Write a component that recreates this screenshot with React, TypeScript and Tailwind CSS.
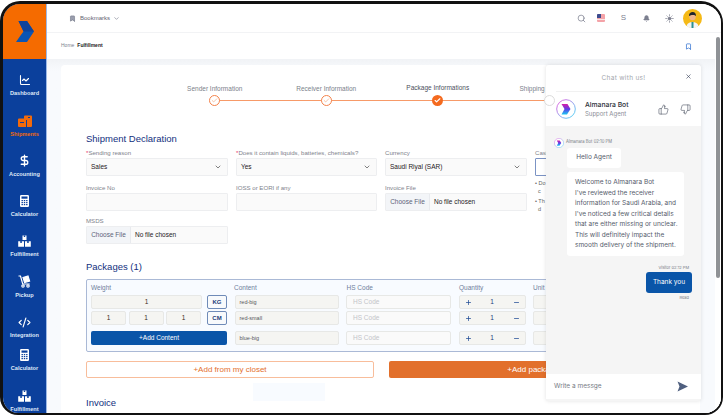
import React from "react";
import { ChartLine, DollarSign, CodeXml, ChevronDown, Bookmark, Search, Sun, Bell, X, ThumbsUp, ThumbsDown, Check, Plus, Minus } from "lucide-react";

const ShipIcon = () => (
  <svg width="14" height="12" viewBox="0 0 14 12" fill="#f26a0b">
    <path d="M6 1.5a1 1 0 0 1 1-1h6a1 1 0 0 1 1 1V11a1 1 0 0 1-1 1H9V5H6z" />
    <path d="M0 4.5a1 1 0 0 1 1-1h6.5a.5.5 0 0 1 .5.5v8H1a1 1 0 0 1-1-1zM2 7v1h4V7z" fillRule="evenodd" />
    <rect x="10" y="2" width="2" height="1" fill="#0b409c" />
  </svg>
);
const BoxesIcon = () => (
  <svg width="13" height="12" viewBox="0 0 13 12" fill="#fff">
    <path d="M4.5 0.5h4v4.5h-4z" />
    <path d="M0.2 6.2h5.8v5.6h-5.8zM7 6.2h5.8v5.6H7z" />
    <path d="M2.3 6h1.5v2h-1.5zM9.2 6h1.5v2H9.2zM5.8 .5h1.4v1.6H5.8z" fill="#0b409c" />
  </svg>
);
const PickupIcon = () => (
  <svg width="13" height="13" viewBox="0 0 13 13" fill="none" stroke="#fff" strokeWidth="1.2">
    <path d="M0.5 1h2l2.2 8h7" />
    <circle cx="5" cy="11" r="1.2" />
    <circle cx="10" cy="11" r="1.2" />
    <path d="M5 2.5l5-1.5 1.6 5-5 1.6z" fill="#fff" />
  </svg>
);
const CalcSolid = () => (
  <svg width="9" height="12" viewBox="0 0 9 12">
    <rect width="9" height="12" rx="1.2" fill="#fff" />
    <rect x="1.5" y="1.5" width="6" height="2.2" fill="#0b409c" />
    {[5, 7, 9].map((y) => [1.5, 3.8, 6.1].map((x) => <rect key={`${x}${y}`} x={x} y={y} width="1.4" height="1.2" fill="#0b409c" />))}
  </svg>
);
const BotLogo = ({ size }: { size: number }) => (
  <svg width={size} height={size} viewBox="0 0 20 20" fill="none">
    <defs>
      <linearGradient id={`r${size}`} x1="0" y1="0" x2="1" y2="1">
        <stop offset="0" stopColor="#e935d8" />
        <stop offset="1" stopColor="#1ad5f5" />
      </linearGradient>
      <linearGradient id={`a${size}`} x1="0" y1="0" x2="0" y2="1">
        <stop offset="0" stopColor="#d81ba8" />
        <stop offset=".5" stopColor="#5b3fe8" />
        <stop offset="1" stopColor="#18c8f2" />
      </linearGradient>
    </defs>
    <circle cx="10" cy="10" r="9.3" stroke={`url(#r${size})`} strokeWidth=".8" fill="#fff" />
    <path d="M5.5 5h6l3 5-3.5 5.5H5.5L8.5 10z" fill={`url(#a${size})`} />
  </svg>
);

const Nav = ({ icon, label, active, cls }: { icon: React.ReactNode; label: string; active?: boolean; cls: string }) => (
  <div className={`flex flex-col items-center justify-end ${cls}`}>
    <div className="h-[14px] flex items-center justify-center">{icon}</div>
    <div className={`text-[5.6px] leading-[8px] mt-[2px] font-bold ${active ? "text-[#f26a0b]" : "text-[#dfe8f7]"}`}>{label}</div>
  </div>
);

const Step = ({ label, state, up, last }: { label: string; state: "done" | "cur" | "todo"; up?: boolean; last?: boolean }) => (
  <div className="w-[111.5px] shrink-0 flex flex-col items-center relative">
    <div className={`text-[6.5px] leading-[8px] whitespace-nowrap ${up ? "text-[#4b4f5c] mb-[3px]" : "text-[#7b7f8a] mt-[1px] mb-[2px]"}`}>{label}</div>
    <div className={`relative z-10 w-[11px] h-[11px] rounded-full flex items-center justify-center ${state === "cur" ? "bg-[#f46a1f]" : state === "todo" ? "bg-white border border-[#dcdcdc]" : "bg-white border border-[#f4824a]"}`}>
      {state !== "todo" && <Check size={7} strokeWidth={state === "cur" ? 4 : 2} color={state === "cur" ? "#fff" : "#f19a68"} />}
    </div>
    {!last && <div className="absolute left-1/2 bottom-[5px] w-full h-px bg-[#f79a68]" />}
  </div>
);

const Label = ({ children, req }: { children: React.ReactNode; req?: boolean }) => (
  <div className="text-[6.1px] leading-[8px] text-[#80838c] whitespace-nowrap">
    {req && <span className="text-[#e8356d]">*</span>}
    {children}
  </div>
);
const SelectBox = ({ v }: { v: string }) => (
  <div className="h-[18px] mt-[1px] bg-[#fafafa] border border-[#edeef0] rounded-[1px] flex items-center justify-between pl-[4px] pr-[5px] text-[6.5px] text-[#1f2024]">
    <span>{v}</span>
    <ChevronDown size={8} color="#444" />
  </div>
);
const InputBox = () => <div className="h-[18px] mt-[1px] bg-[#fafafa] border border-[#edeef0] rounded-[1px]" />;
const FileBox = () => (
  <div className="h-[18px] mt-[1px] bg-[#fafafa] border border-[#edeef0] rounded-[1px] flex items-center text-[6.5px]">
    <div className="h-full w-[44px] bg-[#f3f5f8] border-r border-[#e8eaee] flex items-center justify-center text-[#5d6478]">Choose File</div>
    <div className="pl-[4px] text-[#1f2024]">No file chosen</div>
  </div>
);

const Cell = ({ w, children, ph }: { w: string; children?: React.ReactNode; ph?: boolean }) => (
  <div className={`${w} h-[14px] shrink-0 rounded-[2px] border border-[#e7e8e6] flex items-center text-[5.5px] ${ph ? "bg-[#fafafa] text-[#c2c4c8] text-[6.5px] pl-[6px]" : "bg-[#f5f5f2] text-[#55575c] pl-[4px]"}`}>
    {children}
  </div>
);
const Center = ({ w, v = "1" }: { w: string; v?: string }) => (
  <div className={`${w} h-[14px] shrink-0 rounded-[2px] border border-[#e7e8e6] bg-[#f5f5f2] flex items-center justify-center text-[6.5px] text-[#3a2a20] font-medium`}>{v}</div>
);
const Unit = ({ v }: { v: string }) => (
  <div className="w-[20px] h-[14px] shrink-0 ml-auto rounded-[2px] border border-[#6f8bb8] bg-[#f8fafc] flex items-center justify-center text-[6px] font-bold text-[#1b3a78]">{v}</div>
);
const Qty = () => (
  <div className="w-[67px] h-[14px] shrink-0 rounded-[2px] border border-[#e7e8e6] bg-[#f5f5f2] flex items-center justify-between px-[5px] text-[6.5px] font-medium text-[#1b3a78]">
    <Plus size={7} strokeWidth={2.5} color="#1f4a94" />
    <span>1</span>
    <Minus size={7} strokeWidth={2.5} color="#1f4a94" />
  </div>
);
const Rest = ({ name }: { name: string }) => (
  <>
    <Cell w="w-[104px]"><span>{name}</span></Cell>
    <Cell w="w-[105px]" ph><span>HS Code</span></Cell>
    <Qty />
    <Cell w="w-[40px]" />
  </>
);

export default function App() {
  return (
    <div className="w-[725px] h-[416px] bg-white overflow-hidden pr-[2px] pt-px pb-[1px]" style={{ fontFamily: '"Liberation Sans", Arial, sans-serif' }}>
      <div className="w-full h-[414px] rounded-tl-[20px] rounded-tr-[22px] rounded-bl-[18px] rounded-br-[18px] border-t-[3px] border-l-[3px] border-r-[2px] border-b-[2px] border-[#111] overflow-hidden flex relative bg-white">
        {/* sidebar */}
        <div className="w-[44px] shrink-0 flex flex-col bg-[#0b409c] border-r border-[#9db9e6] relative">
          <div className="h-[55px] shrink-0 bg-[#f56b00] flex items-center justify-center">
            <svg width="18" height="22" viewBox="0 0 18 22">
              <path d="M2.5 0h8.5l7 10.5-7 10.5H0l4.5-6.5 3-4z" fill="#0b55b4" />
              <path d="M2.5 0h8.5l7 10.5H7.5z" fill="#10439a" />
            </svg>
          </div>
          <Nav cls="h-[38px]" icon={<ChartLine size={12} color="#fff" strokeWidth={2.2} />} label="Dashboard" />
          <Nav cls="h-[40.5px]" active icon={<ShipIcon />} label="Shipments" />
          <Nav cls="h-[40px]" icon={<DollarSign size={13} color="#fff" strokeWidth={2.5} />} label="Accounting" />
          <Nav cls="h-[40px]" icon={<CalcSolid />} label="Calculator" />
          <Nav cls="h-[40.5px]" icon={<BoxesIcon />} label="Fulfillment" />
          <Nav cls="h-[40.5px]" icon={<PickupIcon />} label="Pickup" />
          <Nav cls="h-[40.5px]" icon={<CodeXml size={13} color="#fff" strokeWidth={2.2} />} label="Integration" />
          <Nav cls="h-[33px]" icon={<CalcSolid />} label="Calculator" />
          <Nav cls="h-[41px]" icon={<BoxesIcon />} label="Fulfillment" />
        </div>
        {/* main */}
        <div className="flex-1 min-w-0 flex flex-col relative">
          <div className="h-[29px] shrink-0 bg-white border-b border-[#f2f3f5] flex items-center pl-[22px] pr-[19px]">
            <Bookmark size={7} color="#6f7484" fill="#9a9eae" />
            <span className="ml-[4px] text-[6px] text-[#5f6370]">Bookmarks</span>
            <ChevronDown size={7} color="#6f7484" className="ml-[3px]" />
            <div className="ml-auto flex items-center">
              <Search size={9} color="#7d8090" />
              <svg width="8" height="8" viewBox="0 0 8 8" className="ml-[10.5px] rounded-[1px]">
                <rect width="8" height="8" fill="#f4a3a8" />
                <rect width="4" height="4" fill="#3d4d8f" />
                <rect y="5" width="8" height="1" fill="#fbe3e4" />
              </svg>
              <span className="ml-[16px] text-[8px] text-[#7d8090]">S</span>
              <Bell size={7} color="#7d8090" fill="#7d8090" className="ml-[17px]" />
              <Sun size={9} color="#7d8090" fill="#7d8090" className="ml-[15px]" />
              <svg width="19" height="19" viewBox="0 0 19 19" className="ml-[9px]">
                <circle cx="9.5" cy="9.5" r="9.5" fill="#f5b916" />
                <path d="M3.5 17c1-3 3-4 6-4s5 1 6 4a9.5 9.5 0 0 1-12 0z" fill="#f4f4f4" />
                <circle cx="9.5" cy="8" r="3.2" fill="#eeb58c" />
                <path d="M6 7c0-3 1.6-4 3.7-4S13 4.500 13 7c-1-1.500-5-1.500-7 0z" fill="#20242c" />
                <path d="M8.500 13h2v6h-2z" fill="#2d8f8f" />
              </svg>
            </div>
          </div>
          <div className="h-[26px] shrink-0 bg-white flex items-center pl-[14px] pr-[29px] text-[5px]">
            <span className="text-[#7d8090]">Home</span>
            <span className="ml-[3px] text-[#222] font-bold">Fulfillment</span>
            <Bookmark size={7} color="#2f6fd0" strokeWidth={2.5} className="ml-auto" />
          </div>
          <div className="flex-1 min-h-0 bg-[#f1f3f6] flex">
            <div className="flex-1 min-w-0 pl-[14px] pt-[6px] pr-[15px] bg-gradient-to-b from-[#f1f3f6] to-[#f8fafd] to-[12px]">
              <div className="h-[360px] bg-white rounded-t-[4px] pl-[25px] overflow-hidden">
                {/* stepper */}
                <div className="flex h-[41px] items-end ml-[73px] w-[600px]">
                  <Step label="Sender Information" state="done" />
                  <Step label="Receiver Information" state="done" />
                  <Step label="Package Informations" state="cur" up />
                  <Step label="Shipping Information" state="todo" last />
                </div>
                <div className="mt-[27.3px] text-[9.5px] leading-[12px] text-[#12307e]">Shipment Declaration</div>
                <div className="mt-[3.5px] grid grid-cols-[142px_141px_142px_142px] gap-x-[8px] w-[600px]">
                  <div><Label req>Sending reason</Label><SelectBox v="Sales" /></div>
                  <div><Label req>Does it contain liquids, batteries, chemicals?</Label><SelectBox v="Yes" /></div>
                  <div><Label>Currency</Label><SelectBox v="Saudi Riyal (SAR)" /></div>
                  <div><Label>Cash on delivery</Label><div className="h-[18px] mt-[1px] bg-white border border-[#7b93c4] rounded-[1px]" /></div>
                  <div className="mt-[8px]"><Label>Invoice No</Label><InputBox /></div>
                  <div className="mt-[8px]"><Label>IOSS or EORI if any</Label><InputBox /></div>
                  <div className="mt-[8px]"><Label>Invoice File</Label><FileBox /></div>
                  <div className="row-span-2 mt-[3.5px] text-[5.5px] leading-[8px] text-[#666]"><div>• Do</div><div>&nbsp; c</div><div className="mt-[2px]">• Th</div><div>&nbsp; d</div></div>
                  <div className="mt-[6px]"><Label>MSDS</Label><FileBox /></div>
                </div>
                <div className="mt-[17px] text-[9.5px] leading-[12px] text-[#12307e]">Packages (1)</div>
                <div className="mt-[6.3px] w-[640px] h-[73px] bg-[#f8fbff] border border-[#aab9d6] rounded-[2px] pl-[4px] pt-[3px] flex flex-col gap-[2px]">
                  <div className="flex text-[6.500px] leading-[10px] text-[#6f7f9c]">
                    <div className="w-[143px]">Weight</div>
                    <div className="w-[112.500px]">Content</div>
                    <div className="w-[112.500px]">HS Code</div>
                    <div className="w-[74px]">Quantity</div>
                    <div>Unit</div>
                  </div>
                  <div className="flex gap-[7.5px] items-center">
                    <div className="flex w-[136px] shrink-0">
                      <Center w="w-[111px]" /><Unit v="KG" />
                    </div>
                    <Rest name="red-big" />
                  </div>
                  <div className="flex gap-[7.5px] items-center mb-[4px]">
                    <div className="flex gap-[2.5px] w-[136px] shrink-0">
                      <Center w="w-[35px]" /><Center w="w-[35px]" /><Center w="w-[35px]" /><Unit v="CM" />
                    </div>
                    <Rest name="red-small" />
                  </div>
                  <div className="flex gap-[7.5px] items-center">
                    <div className="w-[136px] h-[14px] shrink-0 rounded-[2px] bg-[#0a55a8] text-white text-[6.500px] flex items-center justify-center">+Add Content</div>
                    <Rest name="blue-big" />
                  </div>
                </div>
                <div className="mt-[9px] flex gap-[15px] relative">
                  <div className="w-[288px] h-[17px] bg-white border border-[#f8bd9b] rounded-[2px] flex items-center justify-center text-[8px] text-[#e4702e]">+Add from my closet</div>
                  <div className="w-[288px] h-[17px] bg-[#e2702c] rounded-[2px] flex items-center justify-center text-[8px] text-white">+Add package</div>
                  <div className="absolute left-[167px] top-[22px] w-[72px] h-[18px] bg-[#f8fbff]" />
                </div>
                <div className="mt-[19px] text-[9.5px] leading-[12px] text-[#12307e]">Invoice</div>
              </div>
            </div>
            <div className="w-[6px] shrink-0 bg-white" />
          </div>
          {/* page scrollbar */}
          <div className="absolute right-[1px] top-[33px] w-[4px] h-[241px] rounded-full bg-[#8f9296]" />
        </div>
        {/* chat */}
        <div className="absolute left-[543px] top-[61px] w-[155px] h-[336px] bg-[#f5f5f5] rounded-[3px] shadow-[0_0_4px_rgba(0,0,0,0.12)] flex flex-col">
          <div className="bg-white rounded-t-[3px] px-[10px]">
            <div className="relative h-[27px] pt-[1px] border-b border-[#f1f1f1] flex items-center justify-center text-[6.5px] tracking-[0.3px] text-[#a4a7ad]" style={{ fontFamily: "Inter, sans-serif" }}>
              Chat with us!
              <X size={7} color="#2c3650" strokeWidth={2} className="absolute right-[-1px] top-[8px]" />
            </div>
            <div className="h-[34px] flex items-center" style={{ fontFamily: "Inter, sans-serif" }}>
              <BotLogo size={20} />
              <div className="ml-[9px] flex-1">
                <div className="text-[6.800px] leading-[9px] font-medium text-[#2b2f38]">Almanara Bot</div>
                <div className="text-[6px] leading-[9px] text-[#8a8e96]">Support Agent</div>
              </div>
              <ThumbsUp size={11} color="#3d4454" strokeWidth={1.2} />
              <ThumbsDown size={11} color="#3d4454" strokeWidth={1.2} className="ml-[11px]" />
            </div>
          </div>
          <div className="flex-1 min-h-0 flex flex-col pt-[11px] pl-[8px] pr-[9px]" style={{ fontFamily: "Inter, sans-serif" }}>
            <div className="flex items-center h-[11px] text-[4.200px] text-[#777b85]">
              <BotLogo size={10} />
              <span className="ml-[2px]">Almanara Bot 02:10 PM</span>
            </div>
            <div className="ml-[13px] w-[54px] h-[20px] bg-white rounded-[3px] flex items-center justify-center text-[6.500px] text-[#555b6b]">Hello Agent</div>
            <div className="ml-[13px] mt-[4px] w-[117px] h-[84px] bg-white rounded-[3px] pl-[8px] pt-[5px] text-[6.500px] leading-[10.500px] text-[#555b6b] whitespace-nowrap">
              Welcome to Almanara Bot<br />
              I've reviewed the receiver<br />
              information for Saudi Arabia, and<br />
              I've noticed a few critical details<br />
              that are either missing or unclear.<br />
              This will definitely impact the<br />
              smooth delivery of the shipment.
            </div>
            <div className="mt-[9px] text-right text-[4px] leading-[6px] pr-[3px] text-[#777b85]">Visitor 02:12 PM</div>
            <div className="self-end mt-[1px] w-[46px] h-[21px] bg-[#0a55a8] rounded-[3px] flex items-center justify-center text-[6.500px] text-white">Thank you</div>
            <div className="text-right text-[4px] leading-[6px] mt-[2px] pr-[3px] text-[#777b85]">Read</div>
          </div>
          <div className="h-[25px] shrink-0 mb-[2px] bg-white flex items-center justify-between pl-[8px] pr-[13px] text-[6.500px] text-[#777b85]" style={{ fontFamily: "Inter, sans-serif" }}>
            <span>Write a messge</span>
            <svg width="11" height="11" viewBox="0 0 11 11"><path d="M0.500 .500L11 5.500 .500 10.500 2.500 5.500z" fill="#4f5f7f" /></svg>
          </div>
        </div>
      </div>
    </div>
  );
}
